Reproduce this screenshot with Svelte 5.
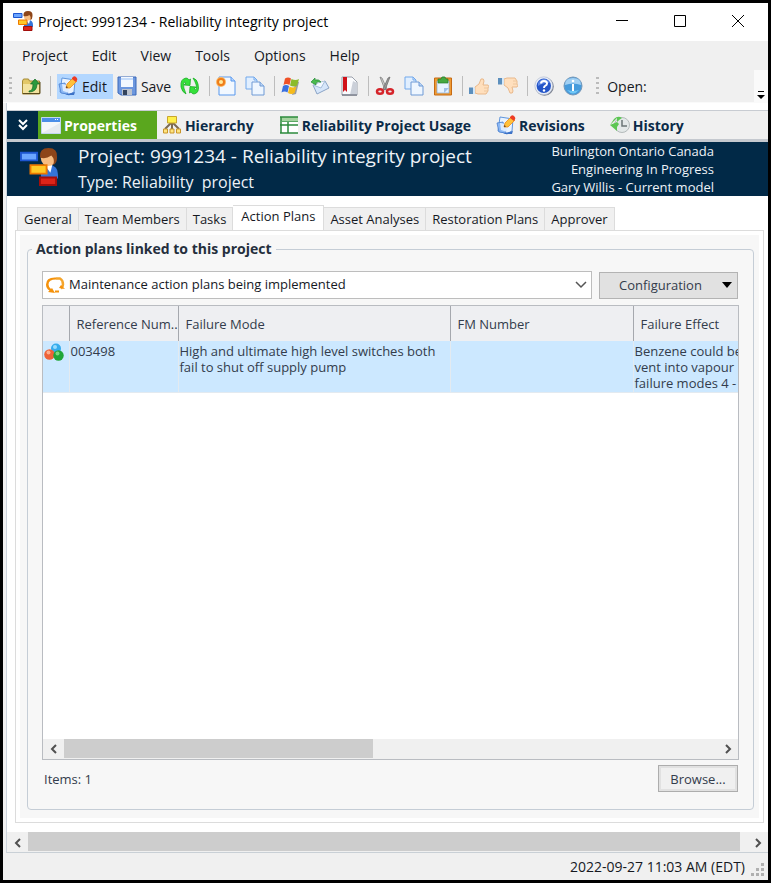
<script>
  const menus = ['Project', 'Edit', 'View', 'Tools', 'Options', 'Help'];

  const tools = [
    [{ icon: 'folder', title: 'Go to' }],
    [
      { icon: 'edit', title: 'Edit', label: 'Edit', active: true },
      { icon: 'save', title: 'Save', label: 'Save' },
      { icon: 'refresh', title: 'Refresh' },
    ],
    [
      { icon: 'new', title: 'New' },
      { icon: 'copy', title: 'Duplicate' },
    ],
    [
      { icon: 'windows', title: 'Windows' },
      { icon: 'send', title: 'Send' },
      { icon: 'bookmark', title: 'Bookmark' },
    ],
    [
      { icon: 'cut', title: 'Cut' },
      { icon: 'copy', title: 'Copy' },
      { icon: 'paste', title: 'Paste' },
    ],
    [
      { icon: 'up', title: 'Approve' },
      { icon: 'down', title: 'Reject' },
    ],
    [
      { icon: 'help', title: 'Help' },
      { icon: 'info', title: 'About' },
    ],
  ];

  const views = [
    { icon: 'form', label: 'Properties' },
    { icon: 'tree', label: 'Hierarchy' },
    { icon: 'grid', label: 'Reliability Project Usage' },
    { icon: 'edit', label: 'Revisions' },
    { icon: 'history', label: 'History' },
  ];

  const tabs = [
    'General',
    'Team Members',
    'Tasks',
    'Action Plans',
    'Asset Analyses',
    'Restoration Plans',
    'Approver',
  ];

  const rows = [
    {
      ref: '003498',
      mode: 'High and ultimate high level switches both\nfail to shut off supply pump',
      fm: '',
      effect: 'Benzene could be\nvent into vapour\nfailure modes 4 -',
    },
  ];

  let view = $state('Properties');
  let tab = $state('Action Plans');
</script>

{#snippet icon(name)}
  <svg class="icon" viewBox="0 0 20 20" aria-hidden="true">
    {#if name === 'person'}
      <path d="M11 12q0-3 4-3 5 0 5 5v2h-9z" fill="#3474d8" />
      <path d="M13 9h4l-1 4z" fill="#fff" />
      <circle cx="15" cy="5.500" r="4" fill="#f7bd83" />
      <path d="M10.500 5Q10 0 15 0t4.500 5q0 3-2 4 1-3-1-5-3 2-6 1z" fill="#8d4519" />
      <path d="M0.500 2.500h8.500v4H.500z" fill="#6ba5ff" stroke="#1d55d0" />
      <path d="M5.500 9h8.500v4.500H5.500z" fill="#ffc928" stroke="#ef7900" />
      <path d="M10.500 15.500h8.500v4h-8.500z" fill="#dc2418" stroke="#a30e0b" />
    {:else if name === 'folder'}
      <path d="M1.500 5l1-2h5l1 2h10v13h-17z" fill="#e3c868" stroke="#a58a35" />
      <path d="M2 8h16v9H2z" fill="#f3e3a0" />
      <path d="M2 17.500h17V6" fill="none" stroke="#5c4c1c" />
      <path d="M8 15q4 0 4-7H9.500L14 3l4.500 5H16q0 8-8 8z" fill="#2c9a3d" stroke="#166b25" stroke-width=".7" />
    {:else if name === 'edit'}
      <path d="M4 2l13 2-1 12-5 3-9-3z" fill="#e9f3ff" stroke="#5f95dc" />
      <path d="M1 8l6-1 3 11-7-1z" fill="#8db9f4" stroke="#4a7fcf" stroke-width=".8" />
      <path d="M4 8l6 1 1 8-6-2z" fill="#dcebff" />
      <path d="M9 18l8-2-1 3H8z" fill="#3c72c7" />
      <path d="M8 12l1-4 6-6 4 3-7 7z" fill="#ffc13b" stroke="#ec8a19" stroke-width=".8" />
      <path d="M14 2q2-3 4-1t1 3l-1 2-4-3z" fill="#ed3c25" />
      <path d="M8 12l.500-2 1.500 1.500z" fill="#4c3420" />
    {:else if name === 'save'}
      <path d="M1 1h18v18H4l-3-2z" fill="#6d97de" stroke="#3b68b9" />
      <path d="M4 1h12v10H4z" fill="#f3f8ff" />
      <path d="M4 2h12v2H4z" fill="#c6dcfa" />
      <path d="M5 13h10v6H5z" fill="#bcc3ce" />
      <path d="M6 14h4v5H6z" fill="#33435c" />
    {:else if name === 'refresh'}
      <path d="M1 11Q0 3 6 2q2 0 3 2l1.500-1L10 9.500 4 9l2-2Q4 5 3.500 8T6 18Q2 16 1 11z" fill="#35e03a" stroke="#10a81c" stroke-width=".7" />
      <path d="M18 8q2 9-4 10-2 0-3-2l-1.500 1 .500-6.500 6 .500-2 2q2 2 2.500-1T13 2q4 1 5 6z" fill="#35e03a" stroke="#10a81c" stroke-width=".7" />
    {:else if name === 'new'}
      <path d="M3 1h12l4 4v14H3z" fill="#f2f8ff" stroke="#5998ed" />
      <path d="M15 1v4h4" fill="#b8d6ff" stroke="#5998ed" />
      <circle cx="5" cy="6" r="5" fill="#f9b562" />
      <circle cx="5" cy="6" r="4" fill="#ef7c19" />
      <circle cx="5" cy="6" r="2" fill="#ffe99c" />
    {:else if name === 'copy'}
      <path d="M1 1h8l3 3v9H1z" fill="#e1efff" stroke="#72a9ec" />
      <path d="M9 1v3h3" fill="none" stroke="#72a9ec" />
      <path d="M7 6h8l4 4v9H7z" fill="#eef6ff" stroke="#6e9ad5" />
      <path d="M15 6v4h4" fill="#bcd5f5" stroke="#6e9ad5" />
    {:else if name === 'windows'}
      <path d="M15 5l3 1-3 12-4 1z" fill="#9a9ca0" />
      <path d="M4 2.500q3-2 6 0L8.500 9q-3-2-6 0z" fill="#ef5127" />
      <path d="M10.500 3q4 2 7.500 0l-2 6.500q-3 2-7 0z" fill="#8bbb2b" />
      <path d="M2 10q3-2 6 0l-1.500 6.500q-3-2-6 0z" fill="#3a70e0" />
      <path d="M8.500 10.500q3 2 7 0l-2 6.500q-3 2-6.500 0z" fill="#f6bb1c" />
    {:else if name === 'send'}
      <path d="M3 9l12-4 4 7-12 6z" fill="#d6e6fa" stroke="#8ba4c6" />
      <path d="M3 9l8 3 4-7" fill="#f4f9ff" stroke="#a5bddb" />
      <path d="M1 6l4-4v2q4-1 6 2-3-1-5 1v2z" fill="#4abb4e" stroke="#278d37" stroke-width=".7" />
    {:else if name === 'bookmark'}
      <path d="M3 1h10l5 5v13H3z" fill="#fafbfd" stroke="#9ba1ac" />
      <path d="M14 5l4 2v12h-7z" fill="#cbd0d9" />
      <path d="M4 1h4v15l-2-2-2 2z" fill="#d01018" />
      <path d="M3 19h15" stroke="#555b68" />
    {:else if name === 'cut'}
      <path d="M5 1l2 1 5 11-2 1z" fill="#ccc" stroke="#777" stroke-width=".7" />
      <path d="M15 1l-2 1-5 11 2 1z" fill="#999" stroke="#666" stroke-width=".7" />
      <ellipse cx="5" cy="15.500" rx="3" ry="2.300" fill="#eee" stroke="#d5242a" stroke-width="2.500" />
      <ellipse cx="15" cy="15.500" rx="3" ry="2.300" fill="#eee" stroke="#d5242a" stroke-width="2.500" />
    {:else if name === 'paste'}
      <path d="M1.500 2h17v17h-17z" fill="#f09a32" stroke="#c56a13" />
      <path d="M4 5h12v12H4z" fill="#e8f3ff" stroke="#84a9d5" stroke-width=".7" />
      <path d="M11 17v-5h5z" fill="#9fc0e8" />
      <path d="M5 3h3q0-3 4-2l1 2h2v4H5z" fill="#45a840" stroke="#247c2c" stroke-width=".7" />
    {:else if name === 'up' || name === 'down'}
      <g transform={name === 'down' ? 'matrix(1 0 0 -1 0 20)' : null}>
        <path d="M6 11l4-3 2-5q3-1 3 2l-1 4h5q1.500 1 0 3v3l-2 3H9l-3-1z" fill="#ffdfbd" stroke="#e9b98c" />
        <path d="M15 12h4M15 15h4" stroke="#edc79e" />
        <path d="M0 11.500h4v6.500H0z" fill="#5c8fbd" />
        <path d="M4 11.500h2v6.500H4z" fill="#d3e7f9" />
      </g>
    {:else if name === 'help'}
      <circle cx="10.500" cy="10.500" r="9.300" fill="#7a808d" />
      <circle cx="9.800" cy="9.800" r="9" fill="#e8edf7" stroke="#aeb9cf" stroke-width=".6" />
      <circle cx="9.800" cy="9.800" r="7.200" fill="#2455c8" />
      <path d="M4 7q6-8 12 0-5-1-12 3z" fill="#638be5" />
      <path d="M7 7.500q0-2.500 3-2.500t3 2.500q0 1.500-1.500 2.200T10 12" fill="none" stroke="#fff" stroke-width="2" />
      <circle cx="10" cy="14.500" r="1.200" fill="#fff" />
    {:else if name === 'info'}
      <circle cx="10" cy="10" r="9" fill="#469bdc" stroke="#7598b9" />
      <path d="M2 9q0-7 8-7t8 7q-8-3-16 0z" fill="#a2d0f3" />
      <path d="M4 14q6 7 12 0-6 2-12 0z" fill="#72c9f7" />
      <circle cx="10" cy="5" r="1.300" fill="#fff" />
      <path d="M10 8v7" stroke="#fff" stroke-width="2" />
    {:else if name === 'form'}
      <path d="M.500 2.500h19v16H.500z" fill="#f5f7fb" stroke="#c2d6ef" />
      <path d="M1 3h18v4H1z" fill="#4c8ee8" />
      <path d="M14 4h1v1h-1zM16 4h1v1h-1z" fill="#fff" />
      <path d="M1 18h18V8z" fill="#e6eaf0" />
    {:else if name === 'tree'}
      <path d="M10 7v7M9 8l-6 6M11 8l6 6" fill="none" stroke="#7c6a52" stroke-width="2" />
      <path d="M5.500 1.500h9v6.500h-9z" fill="#fff04b" stroke="#c9a52d" />
      <path d="M1.500 14h4v4h-4zM8 14h4v4H8zM14.500 14h4v4h-4z" fill="#ffe580" stroke="#c9962a" />
    {:else if name === 'grid'}
      <path d="M2 2h17v16H2z" fill="#fff" />
      <path d="M2 2h17v4H2z" fill="#a5d39f" />
      <path d="M1 2h18M1 10h18M1 18h18M2 1.500v17M9 6v12" fill="none" stroke="#2d8a3c" stroke-width="1.500" />
      <path d="M1 6.500h18" stroke="#5aa864" />
    {:else if name === 'history'}
      <circle cx="12" cy="10" r="7.500" fill="#e3e8e8" stroke="#b4bbbb" />
      <path d="M12 5v6h5" fill="none" stroke="#6b7475" stroke-width="1.500" />
      <path d="M0 10l7-7v4q3-3 5-4-4-3-8 1zM0 10l7 6v-4l2-3-2-2z" fill="#5cc653" />
    {:else if name === 'cycle'}
      <path d="M10 2.500Q0 2 0 9.500q0 4 3.500 6L2 17l7 1-3-5-1 1q-2.500-2-2.500-4.500 0-5 7.500-5z" fill="#f5920b" />
      <path d="M10 3.500h4q3 1.500 3 6 0 2-2 4" fill="none" stroke="#f5a52b" stroke-width="2.500" />
      <path d="M13 13l6 1-4-4zM9 15.500h4v2H9z" fill="#f5920b" />
    {:else if name === 'balls'}
      <circle cx="12" cy="5.500" r="5" fill="#35acec" />
      <circle cx="11" cy="4" r="2" fill="#96dcff" />
      <circle cx="5.500" cy="11.500" r="5.300" fill="#ee6238" />
      <circle cx="4.500" cy="9.500" r="2" fill="#ffad8b" />
      <circle cx="14.500" cy="12.500" r="5.200" fill="#20a638" />
      <circle cx="13.500" cy="10.500" r="2" fill="#7bd77f" />
    {/if}
  </svg>
{/snippet}

{#snippet scrollbar(start, size)}
  <div class="scrollbar">
    <button aria-label="Scroll left">
      <svg viewBox="0 0 10 10"><path d="M7 1L3 5l4 4" /></svg>
    </button>
    <div class="track">
      <div class="thumb" style={`margin-left: ${start}%; width: ${size}%`}></div>
    </div>
    <button aria-label="Scroll right">
      <svg viewBox="0 0 10 10"><path d="M3 1l4 4-4 4" /></svg>
    </button>
  </div>
{/snippet}

<div class="window">
  <header class="titlebar">
    {@render icon('person')}
    <span class="title">Project: 9991234 - Reliability integrity project</span>
    <button aria-label="Minimize"><svg viewBox="0 0 12 12"><path d="M0 5.500h12" /></svg></button>
    <button aria-label="Maximize"><svg viewBox="0 0 12 12"><path d="M.500.500h11v11H.500z" /></svg></button>
    <button aria-label="Close"><svg viewBox="0 0 12 12"><path d="M0 0l12 12M12 0L0 12" /></svg></button>
  </header>

  <nav class="menubar">
    {#each menus as menu}
      <button>{menu}</button>
    {/each}
  </nav>

  <div class="toolbar">
    <span class="grip"></span>
    {#each tools as group, i}
      {#if i > 0}<span class="separator"></span>{/if}
      <div class="group">
        {#each group as tool}
          <button class:active={tool.active} title={tool.title}>
            {@render icon(tool.icon)}
            {#if tool.label}<span>{tool.label}</span>{/if}
          </button>
        {/each}
      </div>
    {/each}
    <span class="grip last"></span>
    <span class="open">Open:</span>
    <button class="overflow" aria-label="More buttons">
      <svg viewBox="0 0 8 8"><path d="M1 0h6v1H1zM0 4h8L4 8z" /></svg>
    </button>
  </div>

  <main class="client">
    <nav class="views">
      <button class="collapse" aria-label="Collapse">
        <svg viewBox="0 0 10 12"><path d="M1 1l4 4 4-4M1 6l4 4 4-4" /></svg>
      </button>
      {#each views as v}
        <button class="view" class:selected={view === v.label} onclick={() => (view = v.label)}>
          {@render icon(v.icon)}
          <span>{v.label}</span>
        </button>
      {/each}
    </nav>

    <section class="banner">
      {@render icon('person')}
      <div class="heading">
        <h1>Project: 9991234 - Reliability integrity project</h1>
        <p>Type: Reliability&nbsp; project</p>
      </div>
      <div class="details">
        <div>Burlington Ontario Canada</div>
        <div>Engineering In Progress</div>
        <div>Gary Willis - Current model</div>
      </div>
    </section>

    <div class="tabs" role="tablist">
      {#each tabs as t}
        <button role="tab" aria-selected={tab === t} class:selected={tab === t} onclick={() => (tab = t)}>{t}</button>
      {/each}
    </div>

    <section class="panel">
      <fieldset>
        <legend>Action plans linked to this project</legend>
        <div class="filters">
          <div class="combo">
            {@render icon('cycle')}
            <select aria-label="Action plan filter">
              <option>Maintenance action plans being implemented</option>
            </select>
            <svg class="chevron" viewBox="0 0 12 12"><path d="M1 3l5 5 5-5" /></svg>
          </div>
          <button class="config">
            <span>Configuration</span>
            <svg viewBox="0 0 10 6"><path d="M0 0h10L5 6z" /></svg>
          </button>
        </div>

        <div class="grid">
          <div class="rows">
            <table>
              <colgroup>
                <col class="c-icon" />
                <col class="c-ref" />
                <col class="c-mode" />
                <col class="c-fm" />
                <col class="c-effect" />
              </colgroup>
              <thead>
                <tr>
                  <th aria-label="Type"></th>
                  <th>Reference Num..</th>
                  <th>Failure Mode</th>
                  <th>FM Number</th>
                  <th>Failure Effect</th>
                </tr>
              </thead>
              <tbody>
                {#each rows as row (row.ref)}
                  <tr>
                    <td>{@render icon('balls')}</td>
                    <td>{row.ref}</td>
                    <td>{row.mode}</td>
                    <td>{row.fm}</td>
                    <td>{row.effect}</td>
                  </tr>
                {/each}
              </tbody>
            </table>
          </div>
          {@render scrollbar(0, 47.3)}
        </div>

        <div class="footer">
          <span>Items: {rows.length}</span>
          <button class="browse">Browse...</button>
        </div>
      </fieldset>
    </section>

    {@render scrollbar(0, 99)}
  </main>

  <footer class="status">
    <span>2022-09-27 11:03 AM (EDT)</span>
    <svg viewBox="0 0 14 14">
      <path d="M10 0h3v3h-3zM5 5h3v3H5zM10 5h3v3h-3zM0 10h3v3H0zM5 10h3v3H5zM10 10h3v3h-3z" />
    </svg>
  </footer>
</div>

<style>
  :global(body) {
    margin: 0;
    background: #000;
  }

  .window {
    box-sizing: border-box;
    display: flex;
    flex-direction: column;
    min-height: 100vh;
    border: 3px solid #000;
    background: #f0f0f0;
    color: #16191f;
    font-family: 'Open Sans', 'Noto Sans', sans-serif;
    font-size: 14px;
  }

  button,
  select {
    border: 0;
    padding: 0;
    background: none;
    color: inherit;
    font: inherit;
  }

  .icon {
    flex: none;
    display: block;
    width: 20px;
    height: 20px;
  }

  .titlebar {
    display: flex;
    align-items: center;
    height: 36px;
    padding: 0 1px 2px 10px;
    background: #fff;
    color: #000;
  }

  .title {
    flex: 1;
    margin-left: 5px;
    white-space: nowrap;
  }

  .titlebar button {
    display: flex;
    align-items: center;
    justify-content: center;
    width: 58px;
    height: 36px;
  }

  .titlebar button svg {
    width: 12px;
    height: 12px;
    fill: none;
    stroke: #000;
  }

  .menubar {
    display: flex;
    gap: 24px;
    height: 29px;
    padding-left: 19px;
  }

  .toolbar {
    display: flex;
    align-items: center;
    height: 32px;
    padding-left: 6px;
    border-bottom: 1px solid #fafafa;
  }

  .group {
    display: flex;
    gap: 9px;
  }

  .toolbar .group button {
    display: flex;
    align-items: center;
    height: 25px;
    gap: 4px;
  }

  .toolbar .group button.active {
    margin-right: -5px;
    padding: 0 6px 0 1px;
    background: #b3d7ff;
  }

  .grip {
    width: 3px;
    height: 18px;
    margin-right: 9px;
    background: repeating-linear-gradient(#bbb 0 2px, transparent 2px 5px);
  }

  .grip.last {
    margin: 0 8px 0 13px;
  }

  .separator {
    width: 1px;
    height: 20px;
    margin: 0 6px 0 9px;
    background: #bdbdbd;
  }

  .overflow {
    display: flex;
    align-items: flex-end;
    justify-content: center;
    width: 14px;
    height: 32px;
    margin-left: auto;
    padding-bottom: 3px;
    background: #fafafa;
  }

  .overflow svg {
    width: 8px;
    height: 8px;
  }

  .client {
    flex: 1;
    display: flex;
    flex-direction: column;
    margin-left: 3px;
    border-left: 1px solid #ccd3dc;
    border-bottom: 1px solid #c9d0d6;
    background: #fff;
  }

  .views {
    display: flex;
    height: 28px;
    margin-top: 7px;
    border-top: 1px solid #c8ccd2;
    border-bottom: 3px solid #c5c9cf;
    background: #f0f0f0;
    color: #0b2b48;
    font-size: 14px;
    font-weight: 700;
  }

  .collapse {
    width: 31px;
    background: #012947;
  }

  .collapse svg {
    width: 10px;
    height: 12px;
    fill: none;
    stroke: #fff;
    stroke-width: 2;
  }

  .view {
    display: flex;
    align-items: center;
    gap: 3px;
    margin-right: 2px;
    padding: 0 20px 0 3px;
    white-space: nowrap;
  }

  .view.selected {
    background: #5aa71e;
    color: #fff;
  }

  .banner {
    display: flex;
    height: 54px;
    padding-right: 54px;
    background: #012947;
    color: #edf2f7;
    white-space: nowrap;
  }

  .banner .icon {
    width: 38px;
    height: 38px;
    margin: 6px 20px 0 13px;
  }

  .heading {
    flex: 1;
  }

  h1 {
    margin: 1px 0 0;
    font-size: 19px;
    font-weight: 400;
    line-height: 26px;
  }

  p {
    margin: 0;
    font-size: 16px;
    line-height: 26px;
  }

  .details {
    font-size: 13px;
    line-height: 18px;
    text-align: right;
  }

  .tabs {
    display: flex;
    align-items: flex-end;
    height: 26px;
    margin: 9px 0 -1px 10px;
    font-size: 13px;
  }

  .tabs button {
    height: 24px;
    padding: 0 6px;
    border: 1px solid #dcdcdc;
    border-left-width: 0;
    background: #f0f0f0;
    white-space: nowrap;
  }

  .tabs button:first-child {
    border-left-width: 1px;
  }

  .tabs button.selected {
    height: 26px;
    padding: 0 8px 4px;
    border-bottom-color: #fff;
    background: #fff;
  }

  .panel {
    flex: 1;
    display: flex;
    margin: 0 4px 9px 8px;
    padding: 8px 9px 12px 11px;
    border: 1px solid #dcdcdc;
    background: #f7f7f7;
    box-shadow: inset 0 0 0 4px #fff;
  }

  fieldset {
    flex: 1;
    display: flex;
    flex-direction: column;
    min-width: 0;
    margin: 0;
    padding: 12px 14px 17px 14px;
    border: 1px solid #c5cdd6;
    border-radius: 4px;
    color: #333c4c;
    font-size: 13px;
  }

  legend {
    margin-left: -10px;
    padding: 0 4px;
    color: #252f3d;
    font-size: 14px;
    font-weight: 700;
    line-height: 20px;
  }

  .filters {
    display: flex;
    align-items: center;
    gap: 7px;
    margin-right: 1px;
  }

  .combo {
    position: relative;
    flex: 1;
    display: flex;
    align-items: center;
    height: 26px;
    padding-left: 3px;
    border: 1px solid #bdbdbd;
    background: #fff;
    color: #16191f;
  }

  .combo select {
    flex: 1;
    min-width: 0;
    height: 26px;
    padding: 0 20px 2px 3px;
    appearance: none;
  }

  .chevron {
    position: absolute;
    right: 4px;
    width: 12px;
    height: 12px;
    fill: none;
    stroke: #555;
    stroke-width: 1.5;
    pointer-events: none;
  }

  .config {
    display: flex;
    align-items: center;
    width: 139px;
    height: 27px;
    padding: 0 5px 0 19px;
    border: 1px solid #b3b3b3;
    background: #e1e1e1;
  }

  .config span {
    flex: 1;
    text-align: left;
  }

  .config svg {
    width: 10px;
    height: 6px;
  }

  .grid {
    flex: 1;
    display: flex;
    flex-direction: column;
    margin-top: 6px;
    border: 1px solid #b9bcc1;
    background: #fff;
  }

  .rows {
    flex: 1;
    overflow: hidden;
  }

  table {
    width: 792px;
    border-collapse: collapse;
    table-layout: fixed;
  }

  .c-icon {
    width: 26px;
  }

  .c-ref {
    width: 109px;
  }

  .c-mode {
    width: 272px;
  }

  .c-fm {
    width: 183px;
  }

  th {
    height: 35px;
    padding: 0 0 0 7px;
    border-right: 1px solid #a5a8ae;
    background: #eeeff2;
    font-weight: 400;
    text-align: left;
    white-space: nowrap;
  }

  td {
    height: 49px;
    padding: 2px 0 0 1px;
    border-right: 1px solid #e3eaf0;
    border-bottom: 1px solid #e3eaf0;
    background: #cce8ff;
    line-height: 16px;
    vertical-align: top;
    white-space: pre;
  }

  .scrollbar {
    display: flex;
    height: 20px;
    background: #f0f0f0;
  }

  .scrollbar button {
    width: 21px;
  }

  .scrollbar svg {
    width: 10px;
    height: 10px;
    fill: none;
    stroke: #505050;
    stroke-width: 2;
  }

  .track {
    flex: 1;
  }

  .thumb {
    height: 19px;
    background: #cdcdcd;
  }

  .footer {
    display: flex;
    align-items: center;
    justify-content: space-between;
    margin: 5px 1px 0 0;
    padding-left: 2px;
  }

  .browse {
    width: 80px;
    height: 27px;
    border: 1px solid #adadad;
    background: #f0f0f0;
    box-shadow: inset 0 0 0 2px #e1e1e1;
  }

  .status {
    display: flex;
    align-items: center;
    justify-content: flex-end;
    gap: 6px;
    height: 27px;
    padding-right: 3px;
    font-size: 14px;
  }

  .status svg {
    align-self: flex-end;
    width: 14px;
    height: 14px;
    margin-bottom: 3px;
    fill: #b0b0b0;
  }
</style>
